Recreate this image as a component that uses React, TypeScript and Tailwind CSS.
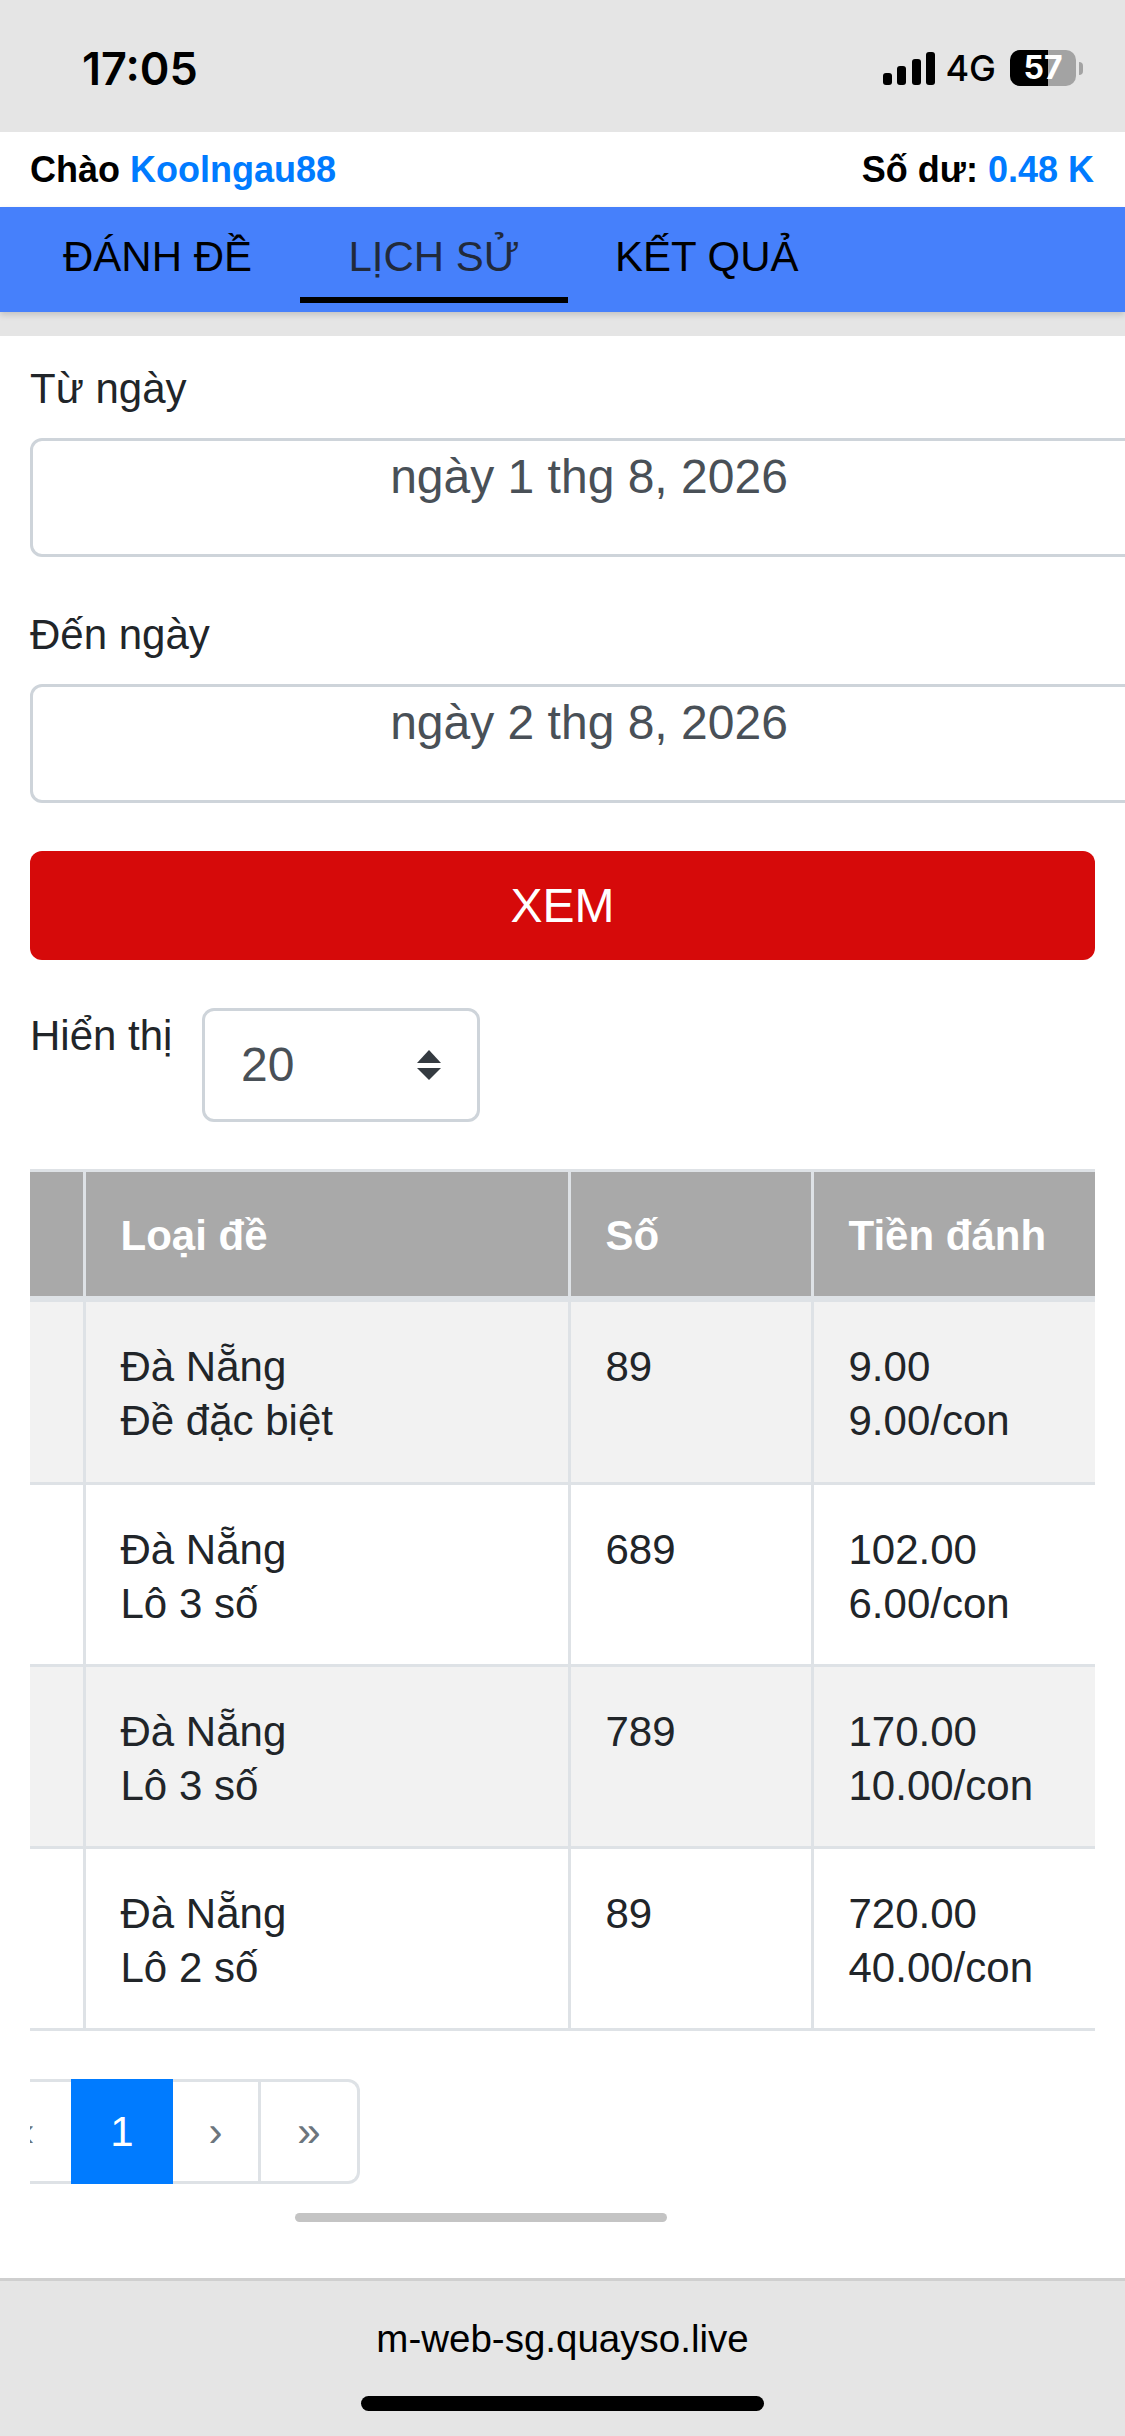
const FONT = "font-['Liberation_Sans',Arial,sans-serif]";

const ROWS = [
  { region: "Đà Nẵng", kind: "Đề đặc biệt", num: "89", total: "9.00", each: "9.00/con" },
  { region: "Đà Nẵng", kind: "Lô 3 số", num: "689", total: "102.00", each: "6.00/con" },
  { region: "Đà Nẵng", kind: "Lô 3 số", num: "789", total: "170.00", each: "10.00/con" },
  { region: "Đà Nẵng", kind: "Lô 2 số", num: "89", total: "720.00", each: "40.00/con" },
];

function StatusBar() {
  return (
    <div className="flex h-[132px] items-center justify-between bg-[#e5e5e5] pl-[82px] pr-[42px] pt-[4px] font-['Inter',sans-serif] text-black">
      <span className="text-[45px] leading-none font-semibold">17:05</span>
      <div className="flex items-center">
        <svg width="52" height="33" viewBox="0 0 52 33" fill="#000">
          <rect x="0" y="21" width="9" height="12" rx="3" />
          <rect x="14" y="14" width="9" height="19" rx="3" />
          <rect x="29" y="7" width="9" height="26" rx="3" />
          <rect x="43" y="0" width="9" height="33" rx="3" />
        </svg>
        <span className="ml-[10px] text-[36px] leading-none font-medium">4G</span>
        <div className="relative ml-[14px] h-[36px] w-[66px] rounded-[10px] bg-[#a3a3a3]">
          <div className="absolute inset-y-0 left-0 w-[38px] rounded-l-[10px] bg-black" />
          <span className="absolute inset-0 flex items-center justify-center text-[32px] leading-none font-bold text-white">
            57
          </span>
        </div>
        <div className="ml-[3px] h-[13px] w-[4px] rounded-r-full bg-[#a3a3a3]" />
      </div>
    </div>
  );
}

function DateField({ label, value }: { label: string; value: string }) {
  return (
    <div className="mb-[46px]">
      <div className="mb-[18px] text-[42px] leading-[63px] text-[#212529]">{label}</div>
      <div className="h-[119px] w-[1118px] rounded-[12px] border-[3px] border-[#ced4da] bg-white text-center text-[48px] leading-[72px] text-[#495057]">
        {value}
      </div>
    </div>
  );
}

export default function App() {
  return (
    <div className={`${FONT} h-[2436px] w-[1125px] overflow-hidden bg-white`}>
      <StatusBar />

      <div className="flex h-[75px] items-center justify-between pl-[30px] pr-[31px] text-[36px] font-bold text-black">
        <span>
          Chào <span className="text-[#007bff]">Koolngau88</span>
        </span>
        <span>
          Số dư: <span className="text-[#007bff]">0.48 K</span>
        </span>
      </div>

      <div className="relative flex h-[105px] items-stretch bg-[#4680fb] pl-[30px] text-[42px] shadow-[0_3px_6px_rgba(0,0,0,0.15)]">
        <div className="flex w-[270px] items-center pb-[6px] pl-[33px] text-black">ĐÁNH ĐỀ</div>
        <div className="mb-[9px] flex w-[268px] items-center justify-center border-b-[6px] border-black pt-[9px] text-[#212a3b]">
          LỊCH SỬ
        </div>
        <div className="flex items-center pb-[6px] pl-[47px] text-black">KẾT QUẢ</div>
      </div>
      <div className="h-[24px] bg-[#e5e5e5]" />

      <div className="pl-[30px] pr-[30px] pt-[21px]">
        <DateField label="Từ ngày" value="ngày 1 thg 8, 2026" />
        <DateField label="Đến ngày" value="ngày 2 thg 8, 2026" />

        <button className="mb-[48px] mt-[48px] block h-[109px] w-full rounded-[12px] bg-[#d60a0a] text-[48px] text-white">
          XEM
        </button>

        <div className="mb-[47px] flex items-start">
          <span className="mt-[3px] w-[172px] text-[42px] leading-[50px] text-[#212529]">Hiển thị</span>
          <div className="flex h-[114px] w-[278px] items-center justify-between rounded-[12px] border-[3px] border-[#ced4da] pl-[36px] pr-[36px] text-[48px] text-[#495057]">
            <span>20</span>
            <svg width="24" height="30" viewBox="0 0 24 30" fill="#343a40">
              <path d="M12 0 L24 13 L0 13 Z" />
              <path d="M0 18 L24 18 L12 30 Z" />
            </svg>
          </div>
        </div>

        <table className="w-[1065px] table-fixed border-collapse text-[42px] leading-[54px] text-[#212529]">
          <colgroup>
            <col className="w-[54px]" />
            <col className="w-[485px]" />
            <col className="w-[243px]" />
            <col />
          </colgroup>
          <thead>
            <tr className="h-[128px] bg-[#a9a9a9] text-left font-bold text-white">
              <th className="border-y-[3px] border-r-[3px] border-y-[#dee2e6] border-b-[6px] border-r-[#dee2e6]" />
              <th className="border-y-[3px] border-x-[3px] border-[#dee2e6] border-b-[6px] pl-[35px] pt-[4px] font-bold">Loại đề</th>
              <th className="border-y-[3px] border-x-[3px] border-[#dee2e6] border-b-[6px] pl-[35px] pt-[4px] font-bold">Số</th>
              <th className="border-y-[3px] border-l-[3px] border-[#dee2e6] border-b-[6px] pl-[35px] pt-[4px] font-bold">Tiền đánh</th>
            </tr>
          </thead>
          <tbody>
            {ROWS.map((r, i) => (
              <tr key={i} className={`align-top ${i === 0 ? "h-[185px] bg-[#f2f2f2]" : i % 2 === 0 ? "h-[182px] bg-[#f2f2f2]" : "h-[182px] bg-white"}`}>
                <td className="border-b-[3px] border-r-[3px] border-[#dee2e6]" />
                <td className="border-b-[3px] border-x-[3px] border-[#dee2e6] pl-[35px] pt-[38px]">
                  {r.region}
                  <br />
                  {r.kind}
                </td>
                <td className="border-b-[3px] border-x-[3px] border-[#dee2e6] pl-[35px] pt-[38px]">{r.num}</td>
                <td className="border-b-[3px] border-l-[3px] border-[#dee2e6] pl-[35px] pt-[38px]">
                  {r.total}
                  <br />
                  {r.each}
                </td>
              </tr>
            ))}
          </tbody>
        </table>

        <div className="mt-[48px] flex h-[105px] w-[330px] rounded-r-[12px] border-y-[3px] border-r-[3px] border-[#dee2e6] text-[#6c757d]">
          <div className="flex w-[41px] items-center justify-start overflow-hidden text-[42px]">
            <span className="-ml-[19px]">«</span>
          </div>
          <div className="-my-[3px] flex w-[102px] items-center justify-center bg-[#007bff] text-[42px] text-white">1</div>
          <div className="flex w-[88px] items-center justify-center border-r-[3px] border-[#dee2e6] text-[42px]">›</div>
          <div className="flex flex-1 items-center justify-center text-[42px]">»</div>
        </div>

        <div className="ml-[265px] mt-[29px] h-[9px] w-[372px] rounded-full bg-[#c4c4c4]" />
      </div>

      <div className="mt-[56px] flex h-[158px] flex-col items-center border-t-[3px] border-[#cfcfcf] bg-[#e5e5e5]">
        <div className="mt-[36px] text-[38.5px] leading-[44px] text-black">m-web-sg.quayso.live</div>
        <div className="mt-[35px] h-[15px] w-[403px] rounded-full bg-black" />
      </div>
    </div>
  );
}
